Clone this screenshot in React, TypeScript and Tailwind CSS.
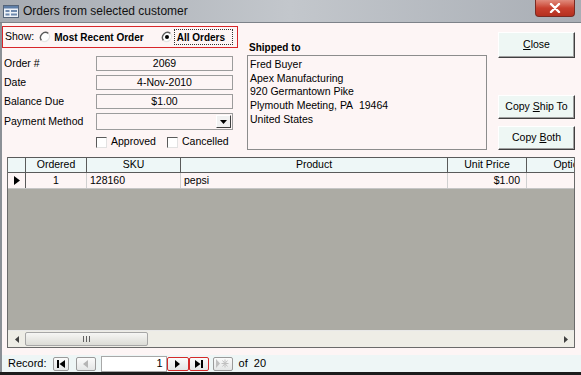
import React from 'react';

function Radio({ checked }: { checked?: boolean }) {
  return (
    <svg width="12" height="12" viewBox="0 0 12 12" className="shrink-0">
      <circle cx="6" cy="6" r="5" fill="#ffffff" />
      <path d="M9.5 2.5 A5 5 0 0 0 2.5 9.5" fill="none" stroke="#5a5a5a" strokeWidth="1.4" />
      <path d="M2.5 9.5 A5 5 0 0 0 9.5 2.5" fill="none" stroke="#e6e6e6" strokeWidth="1.2" />
      {checked && <circle cx="6" cy="6" r="2" fill="#000000" />}
    </svg>
  );
}

function Checkbox() {
  return (
    <div className="w-[11px] h-[11px] shrink-0 bg-white border border-t-[#5a5a5a] border-l-[#5a5a5a] border-r-[#e2e2e2] border-b-[#e2e2e2]" />
  );
}

function Field({ label, value }: { label: string; value: string }) {
  return (
    <div className="flex items-center h-[15px] mb-[4px]">
      <div className="w-[94px] pl-[2px]">{label}</div>
      <div className="w-[137px] h-[15px] border border-[#9c9c9c] flex items-center justify-center leading-none">
        {value}
      </div>
    </div>
  );
}

function Btn({ children, className }: { children: React.ReactNode; className?: string }) {
  return (
    <div
      className={`w-[77px] flex items-center justify-center bg-[#eef7f4] border border-t-[#ffffff] border-l-[#ffffff] border-r-[#404040] border-b-[#404040] shadow-[inset_-1px_-1px_0_#a0a0a0] text-[10.5px] ${className ?? ''}`}
    >
      {children}
    </div>
  );
}

function NavBtn({ children, red, dim, w }: { children: React.ReactNode; red?: boolean; dim?: boolean; w: string }) {
  return (
    <div
      className={`${w} h-[14px] flex items-center justify-center rounded-[2px] border bg-gradient-to-b from-[#fbfbfb] to-[#e4e6e6] ${
        red ? 'border-[#d42a2a]' : 'border-[#9a9a9a]'
      } ${dim ? 'text-[#b8b8b8]' : 'text-black'}`}
    >
      {children}
    </div>
  );
}

export default function App() {
  return (
    <div className="w-[581px] h-[375px] flex flex-col overflow-hidden bg-[#fdf5f5] text-black text-[10.5px] font-['Liberation_Sans',Arial,sans-serif]">
      {/* title bar */}
      <div className="relative h-[23px] shrink-0 flex items-center bg-gradient-to-r from-[#a6abb2] via-[#c3c7cc] to-[#a9aeb5] border-b border-[#7d8289]">
        <svg width="16" height="13" viewBox="0 0 16 13" className="ml-[3px] mr-[4px]">
          <rect x="0.5" y="0.5" width="15" height="12" fill="#eef2f8" stroke="#55657a" />
          <rect x="1" y="1" width="14" height="2.5" fill="#5f7fa8" />
          <rect x="2.5" y="5" width="4" height="2" fill="#6f89ad" />
          <rect x="8" y="5" width="6" height="2" fill="#6f89ad" />
          <rect x="2.5" y="8.5" width="4" height="2" fill="#6f89ad" />
          <rect x="8" y="8.5" width="6" height="2" fill="#6f89ad" />
        </svg>
        <span className="text-[12px] text-[#111]">Orders from selected customer</span>
        <div className="absolute right-[6px] top-0 w-[40px] h-[17px] rounded-b-[4px] border border-t-0 border-[#7a2a22] bg-gradient-to-b from-[#e08a7c] via-[#c8402f] to-[#b5301f] flex items-center justify-center">
          <svg width="12" height="10" viewBox="0 0 12 10">
            <path d="M2 1 L10 9 M10 1 L2 9" stroke="#ffffff" strokeWidth="2.4" strokeLinecap="round" />
          </svg>
        </div>
      </div>

      {/* body */}
      <div className="flex-1 flex flex-col border-l-2 border-[#8b9096]">
        {/* top form */}
        <div className="h-[134px] shrink-0 flex items-start">
          <div className="w-[236px]">
            <div className="mt-[3px] h-[22px] border border-[#d8262a] flex items-center pl-[2px]">
              <span>Show:</span>
              <span className="ml-[5px]"><Radio /></span>
              <span className="ml-[3px] font-bold text-[10px]">Most Recent Order</span>
              <span className="ml-[17px]"><Radio checked /></span>
              <span className="ml-[1px] px-[2px] h-[16px] flex items-center border border-dotted border-[#333] font-bold text-[10px] w-[59px]">All Orders</span>
            </div>
            <div className="mt-[8px]">
              <Field label="Order #" value="2069" />
              <Field label="Date" value="4-Nov-2010" />
              <Field label="Balance Due" value="$1.00" />
              <div className="flex items-center h-[17px]">
                <div className="w-[94px] pl-[2px]">Payment Method</div>
                <div className="w-[137px] h-[17px] border border-[#9c9c9c] flex justify-end items-center pr-[1px]">
                  <div className="w-[15px] h-[13px] bg-[#f2f2f2] border border-t-white border-l-white border-r-[#404040] border-b-[#404040] flex items-center justify-center">
                    <svg width="7" height="4" viewBox="0 0 7 4"><path d="M0 0 H7 L3.5 4 Z" fill="#000" /></svg>
                  </div>
                </div>
              </div>
              <div className="flex items-center mt-[6px] ml-[94px] h-[12px]">
                <Checkbox />
                <span className="ml-[4px]">Approved</span>
                <span className="ml-[11px]"><Checkbox /></span>
                <span className="ml-[4px]">Cancelled</span>
              </div>
            </div>
          </div>

          <div className="ml-[9px] mt-[18px]">
            <div className="h-[14px] leading-[14px] font-bold text-[10px] pl-[2px]">Shipped to</div>
            <div className="w-[240px] h-[95px] border border-[#8c8c8c] pl-[2px] pt-[2px] leading-[13.7px]">
              <div>Fred Buyer</div>
              <div>Apex Manufacturing</div>
              <div>920 Germantown Pike</div>
              <div>Plymouth Meeting, PA&nbsp;&nbsp;19464</div>
              <div>United States</div>
            </div>
          </div>

          <div className="ml-[11px] flex flex-col">
            <Btn className="mt-[9px] h-[26px]"><span><u>C</u>lose</span></Btn>
            <Btn className="mt-[37px] h-[24px]"><span>Copy <u>S</u>hip To</span></Btn>
            <Btn className="mt-[7px] h-[24px]"><span>Copy <u>B</u>oth</span></Btn>
          </div>
        </div>

        {/* datasheet */}
        <div className="ml-[5px] w-[568px] h-[191px] shrink-0 flex flex-col overflow-hidden border-l border-r border-b border-[#6a6a6a]">
          <div className="flex h-[16px] shrink-0 bg-[#eef7f7] border-t border-b border-[#5a5a5a]">
            <div className="w-[18px] shrink-0 border-r border-[#5a5a5a]" />
            <div className="w-[61px] shrink-0 border-r border-[#5a5a5a] flex items-center justify-center">Ordered</div>
            <div className="w-[94px] shrink-0 border-r border-[#5a5a5a] flex items-center justify-center">SKU</div>
            <div className="w-[267px] shrink-0 border-r border-[#5a5a5a] flex items-center justify-center">Product</div>
            <div className="w-[79px] shrink-0 border-r border-[#5a5a5a] flex items-center justify-center">Unit Price</div>
            <div className="w-[90px] shrink-0 border-r border-[#5a5a5a] flex items-center justify-center">Options</div>
          </div>
          <div className="flex h-[16px] shrink-0 bg-[#fdf5f5] border-b border-[#c6c6c6]">
            <div className="w-[18px] shrink-0 border-r border-[#5a5a5a] flex items-center justify-center">
              <svg width="6" height="9" viewBox="0 0 6 9"><path d="M0 0 L6 4.5 L0 9 Z" fill="#000" /></svg>
            </div>
            <div className="w-[61px] shrink-0 border-r border-[#d0d0d0] flex items-center justify-center">1</div>
            <div className="w-[94px] shrink-0 border-r border-[#d0d0d0] flex items-center pl-[3px]">128160</div>
            <div className="w-[267px] shrink-0 border-r border-[#d0d0d0] flex items-center pl-[3px]">pepsi</div>
            <div className="w-[79px] shrink-0 border-r border-[#d0d0d0] flex items-center justify-end pr-[6px]">$1.00</div>
            <div className="w-[90px] shrink-0 border-r border-[#d0d0d0]" />
          </div>
          <div className="flex-1 bg-[#acaba4] border-b border-[#e8e8e8]" />
          <div className="h-[16px] shrink-0 flex items-center bg-[#eeede6]">
            <div className="w-[17px] flex items-center justify-center">
              <svg width="4" height="7" viewBox="0 0 4 7"><path d="M4 0 L0 3.5 L4 7 Z" fill="#404040" /></svg>
            </div>
            <div className="w-[123px] h-[14px] rounded-[2px] border border-[#a6a6a6] bg-gradient-to-b from-[#f6f6f4] to-[#dcdcd6] flex items-center justify-center">
              <svg width="7" height="6" viewBox="0 0 7 6"><path d="M0.5 0 V6 M3.5 0 V6 M6.5 0 V6" stroke="#606060" strokeWidth="1" /></svg>
            </div>
            <div className="flex-1" />
            <div className="w-[17px] flex items-center justify-center">
              <svg width="4" height="7" viewBox="0 0 4 7"><path d="M0 0 L4 3.5 L0 7 Z" fill="#404040" /></svg>
            </div>
          </div>
        </div>

        <div className="h-[7px] shrink-0" />

        {/* record navigator */}
        <div className="h-[17px] shrink-0 flex items-center bg-[#eef6f6] text-[11px]">
          <span className="ml-[6px]">Record:</span>
          <span className="ml-[6px]">
            <NavBtn w="w-[16px]">
              <svg width="8" height="8" viewBox="0 0 8 8"><path d="M0.5 0 V8 M1.5 0 V8" stroke="#000" /><path d="M8 0 L2.5 4 L8 8 Z" fill="#000" /></svg>
            </NavBtn>
          </span>
          <span className="ml-[7px]">
            <NavBtn w="w-[20px]" dim>
              <svg width="5" height="8" viewBox="0 0 5 8"><path d="M5 0 L0 4 L5 8 Z" fill="#b5b5b5" /></svg>
            </NavBtn>
          </span>
          <div className="ml-[5px] w-[66px] h-[16px] bg-white border border-[#a8a8a8] flex items-center justify-end pr-[3px]">1</div>
          <NavBtn w="w-[22px]" red>
            <svg width="5" height="8" viewBox="0 0 5 8"><path d="M0 0 L5 4 L0 8 Z" fill="#000" /></svg>
          </NavBtn>
          <NavBtn w="w-[20px]" red>
            <svg width="8" height="8" viewBox="0 0 8 8"><path d="M0 0 L5.5 4 L0 8 Z" fill="#000" /><path d="M6.5 0 V8 M7.5 0 V8" stroke="#000" /></svg>
          </NavBtn>
          <span className="ml-[4px]">
            <NavBtn w="w-[20px]" dim>
              <svg width="13" height="9" viewBox="0 0 13 9">
                <path d="M0 0 L4 4.5 L0 9 Z" fill="#c0c0c0" />
                <path d="M9 0.5 V8.5 M5.5 4.5 H12.5 M6.5 1.5 L11.5 7.5 M11.5 1.5 L6.5 7.5" stroke="#c0c0c0" strokeWidth="1" />
              </svg>
            </NavBtn>
          </span>
          <span className="ml-[6px]">of&nbsp; 20</span>
        </div>
        <div className="h-[3px] shrink-0 bg-[#1c1c1c] -ml-[2px]" />
      </div>
    </div>
  );
}
